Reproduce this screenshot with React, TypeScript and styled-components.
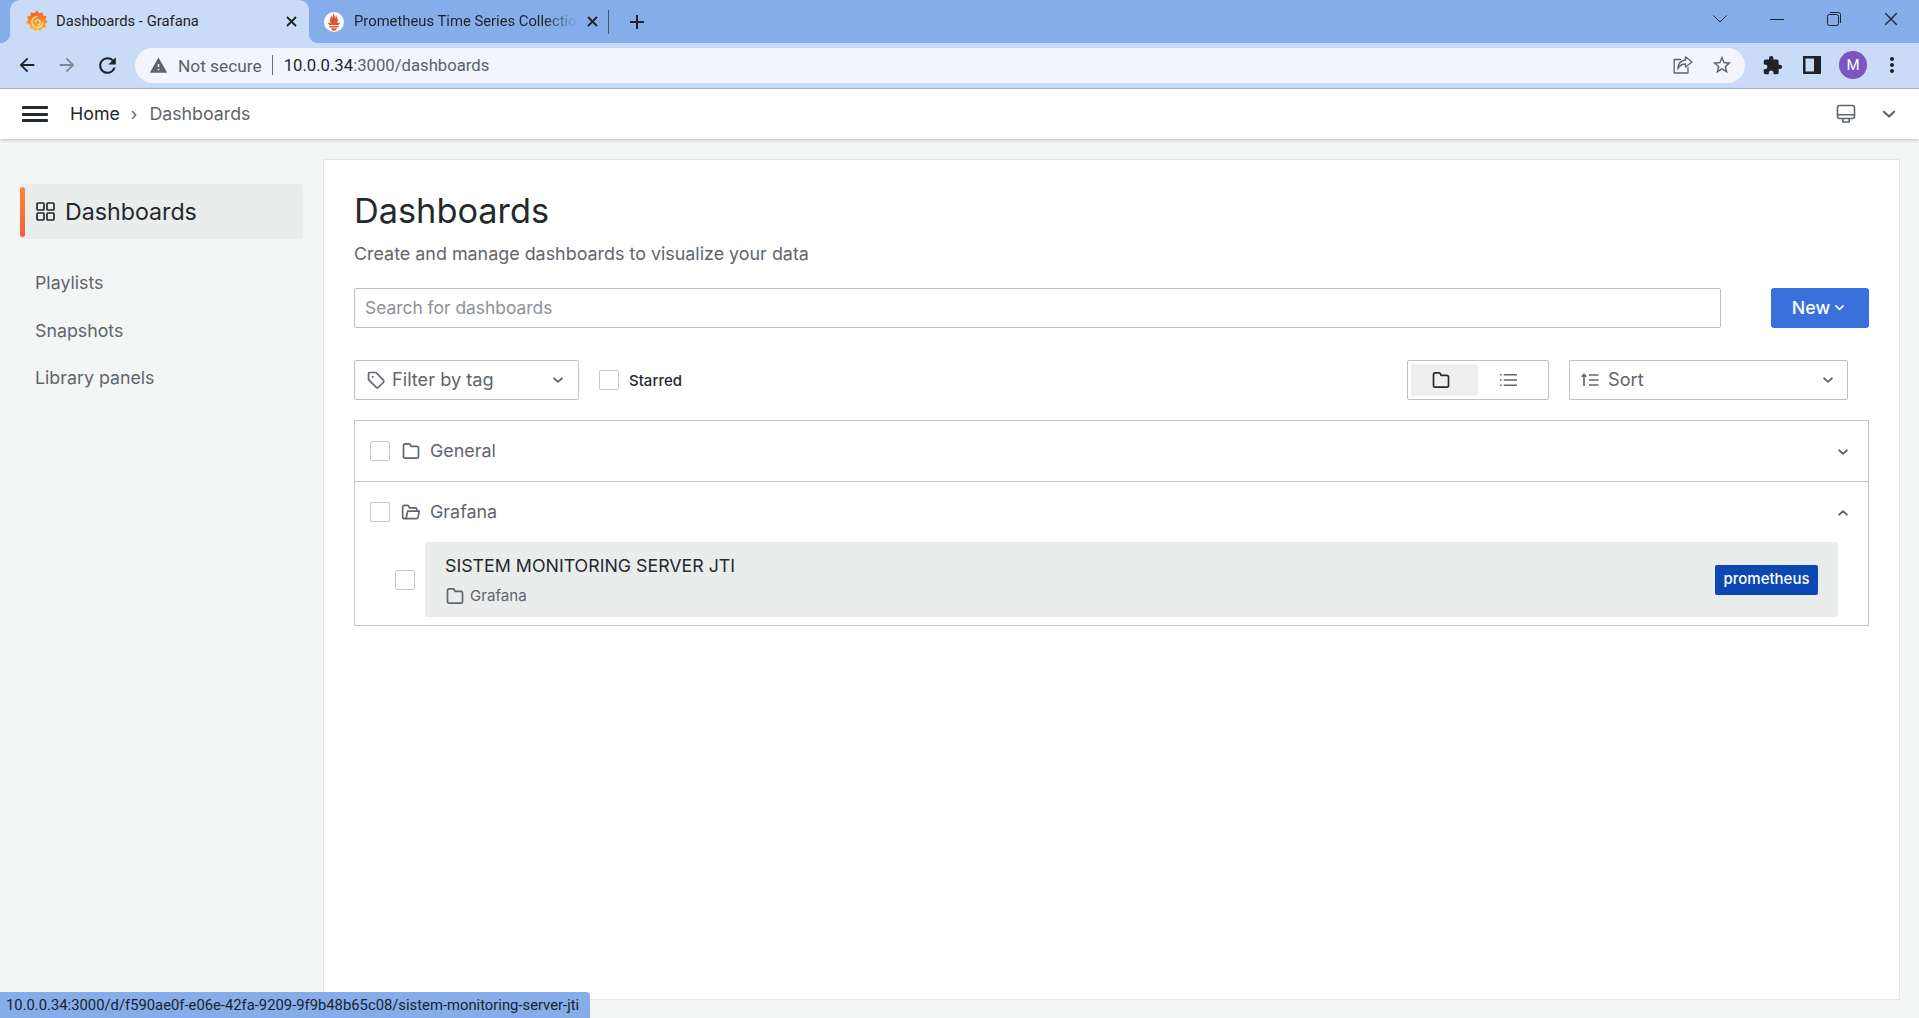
import React from "react";
import styled, { createGlobalStyle } from "styled-components";
import { MdArrowBack, MdArrowForward, MdRefresh, MdStarBorder, MdExtension, MdMoreVert, MdWarning } from "react-icons/md";

const Global = createGlobalStyle`
  html, body { margin: 0; padding: 0; height: 100%; background: #f4f5f5; overflow: hidden; }
  * { box-sizing: border-box; }
`;

const CHROME_FONT = `Roboto, "Open Sans", sans-serif`;
const UI_FONT = `Inter, "Noto Sans", sans-serif`;

const Page = styled.div`
  width: 1919px;
  height: 1018px;
  display: flex;
  flex-direction: column;
  overflow: hidden;
  background: #f4f5f5;
  font-family: ${UI_FONT};
`;

/* ---------- browser chrome ---------- */
const TabStrip = styled.div`
  height: 43px;
  flex: none;
  background: #84ade9;
  display: flex;
  align-items: stretch;
  padding-left: 10px;
  color: #1f2329;
  font-family: ${CHROME_FONT};
`;
const Tab = styled.div<{ $active?: boolean }>`
  position: relative;
  width: 299px;
  display: flex;
  align-items: center;
  padding: 0 ${(p) => (p.$active ? 12 : 10)}px 0 ${(p) => (p.$active ? 16 : 15)}px;
  gap: ${(p) => (p.$active ? 8 : 10)}px;
  border-radius: 10px 10px 0 0;
  background: ${(p) => (p.$active ? "#c9dbf6" : "transparent")};
  ${(p) =>
    p.$active &&
    `
    &::before, &::after {
      content: "";
      position: absolute;
      bottom: 0;
      width: 10px;
      height: 10px;
      background: radial-gradient(circle at var(--cx) 0, #84ade9 10px, #c9dbf6 10.5px);
    }
    &::before { left: -10px; --cx: 0; }
    &::after { right: -10px; --cx: 100%; }
  `}
`;
const TabTitle = styled.span<{ $fade?: boolean }>`
  flex: 1;
  min-width: 0;
  font-size: 14.8px;
  padding-bottom: 2px;
  white-space: nowrap;
  overflow: hidden;
  ${(p) =>
    p.$fade &&
    `
    -webkit-mask-image: linear-gradient(to right, #000 85%, transparent 100%);
    mask-image: linear-gradient(to right, #000 85%, transparent 100%);
  `}
`;
const TabSep = styled.div`
  width: 1px;
  height: 24px;
  background: #44566f;
  align-self: center;
`;
const NewTab = styled.div`
  width: 55px;
  display: flex;
  align-items: center;
  justify-content: center;
`;
const StripSpacer = styled.div`
  flex: 1;
`;
const WindowControls = styled.div`
  display: flex;
  align-items: center;
`;
const WinBtn = styled.div<{ $w: number }>`
  width: ${(p) => p.$w}px;
  display: flex;
  justify-content: center;
  margin-top: -6px;
`;

const Toolbar = styled.div`
  height: 46px;
  flex: none;
  background: #c9dbf6;
  border-bottom: 1px solid #a9b8cf;
  display: flex;
  align-items: center;
  padding-bottom: 1px;
  font-family: ${CHROME_FONT};
`;
const NavGroup = styled.div`
  display: flex;
  align-items: center;
  width: 135px;
  padding-left: 7px;
`;
const NavBtn = styled.div<{ $muted?: boolean }>`
  width: 40px;
  display: flex;
  justify-content: center;
  color: ${(p) => (p.$muted ? "#7d8794" : "#1f2329")};
`;
const Omnibox = styled.div`
  width: 1610px;
  height: 35px;
  background: #f2f6fc;
  border-radius: 18px;
  display: flex;
  align-items: center;
  padding-left: 14px;
  padding-right: 12px;
`;
const NotSecure = styled.span`
  font-size: 17.3px;
  padding-top: 1px;
  color: #5b6066;
  margin-left: 10px;
`;
const OmniSep = styled.span`
  width: 1px;
  height: 20px;
  background: #6b7077;
  margin: 0 11px 0 10px;
`;
const Url = styled.span`
  font-size: 16.7px;
  padding-top: 1px;
  color: #5b6066;
  flex: 1;
  b {
    font-weight: 400;
    color: #1f2329;
  }
`;
const OmniIcons = styled.div`
  display: flex;
  align-items: center;
  gap: 18px;
  color: #5f6368;
`;
const ToolIcons = styled.div`
  display: flex;
  align-items: center;
  color: #1f2329;
  margin-left: 14px;
`;
const ToolSlot = styled.div<{ $w: number }>`
  width: ${(p) => p.$w}px;
  display: flex;
  justify-content: center;
`;
const Avatar = styled.div`
  width: 28px;
  height: 28px;
  border-radius: 50%;
  background: #7c55c0;
  color: #fff;
  font-size: 15px;
  display: flex;
  align-items: center;
  justify-content: center;
`;

/* ---------- Grafana top bar ---------- */
const TopBar = styled.div`
  height: 50px;
  flex: none;
  background: #fff;
  display: flex;
  align-items: center;
  padding: 0 21px 0 22px;
  box-shadow: 0 1px 3px rgba(24, 26, 27, 0.22);
  position: relative;
  z-index: 1;
`;
const Hamburger = styled.div`
  width: 26px;
  height: 16px;
  display: flex;
  flex-direction: column;
  justify-content: space-between;
  margin-right: 22px;
  span {
    display: block;
    height: 3px;
    border-radius: 1px;
    background: #24292e;
  }
`;
const Crumb = styled.span<{ $muted?: boolean }>`
  font-size: 17.8px;
  padding-bottom: 1px;
  color: ${(p) => (p.$muted ? "#5f656c" : "#24292e")};
`;
const CrumbSep = styled.span`
  font-size: 17px;
  color: #5f656c;
  margin: 0 12px 0 11px;
`;
const TopRight = styled.div`
  margin-left: auto;
  display: flex;
  align-items: center;
  gap: 24px;
  color: #5f656c;
`;

/* ---------- page ---------- */
const Body = styled.div`
  flex: 1;
  display: flex;
  min-height: 0;
  padding: 20px 19px 18px 0;
`;
const Sidebar = styled.nav`
  width: 323px;
  flex: none;
  padding: 25px 0 0 20px;
`;
const ActiveItem = styled.div`
  width: 283px;
  height: 55px;
  background: #ebecec;
  border-radius: 3px;
  display: flex;
  align-items: center;
  gap: 10px;
  padding-left: 16px;
  font-size: 23.2px;
  color: #24292e;
  position: relative;
  &::before {
    content: "";
    position: absolute;
    left: 0;
    top: 3px;
    bottom: 2px;
    width: 5px;
    border-radius: 3px;
    background: linear-gradient(180deg, #f58a33 0%, #f55f3e 100%);
  }
`;
const SideLinks = styled.div`
  display: flex;
  flex-direction: column;
  padding: 20px 0 0 15px;
`;
const SideLink = styled.div`
  height: 47.6px;
  display: flex;
  align-items: center;
  font-size: 17.8px;
  color: #5f656c;
`;
const Card = styled.main`
  flex: 1;
  background: #fff;
  border: 1px solid #e6e7e8;
  padding: 30px 30px 0 30px;
  min-width: 0;
`;
const Title = styled.h1`
  margin: 0;
  font-size: 34.3px;
  line-height: 42px;
  font-weight: 400;
  color: #24292e;
`;
const Subtitle = styled.p`
  margin: 11px 0 0;
  font-size: 17.9px;
  line-height: 22px;
  color: #5f656c;
`;
const SearchRow = styled.div`
  display: flex;
  justify-content: space-between;
  margin-top: 23px;
`;
const Field = styled.div<{ $w: number }>`
  width: ${(p) => p.$w}px;
  height: 40px;
  border: 1px solid #bfc0c1;
  border-radius: 2px;
  background: #fff;
  display: flex;
  align-items: center;
  color: #5f656c;
  font-size: 18.2px;
`;
const SearchInput = styled.input`
  width: 1367px;
  height: 40px;
  border: 1px solid #bfc0c1;
  border-radius: 2px;
  padding: 0 10px 2px;
  font-family: ${UI_FONT};
  font-size: 17.4px;
  outline: none;
  &::placeholder {
    color: #8f9296;
    opacity: 1;
  }
`;
const NewButton = styled.button`
  width: 98px;
  height: 40px;
  border: 0;
  border-radius: 3px;
  background: #3871dc;
  color: #fff;
  font-family: ${UI_FONT};
  font-size: 17.8px;
  font-weight: 500;
  padding: 0 2px 2px 0;
  display: flex;
  align-items: center;
  justify-content: center;
  gap: 3px;
`;
const FilterRow = styled.div`
  display: flex;
  align-items: center;
  margin-top: 32px;
`;
const FilterLabel = styled.span`
  flex: 1;
  margin-left: 6px;
  padding-bottom: 2px;
`;
const FilterField = styled(Field)`
  padding: 0 13px 0 11px;
`;
const Check = styled.span<{ $mr?: number }>`
  width: 20px;
  height: 20px;
  flex: none;
  border: 1px solid #c5c6c7;
  border-radius: 2px;
  background: #fff;
  margin-right: ${(p) => p.$mr ?? 0}px;
`;
const StarredWrap = styled.div`
  display: flex;
  align-items: center;
  margin-left: 20px;
  font-size: 15px;
  font-weight: 500;
  color: #24292e;
  gap: 10px;
  flex: 1;
`;
const Toggle = styled.div`
  width: 142px;
  height: 40px;
  border: 1px solid #bfc0c1;
  border-radius: 2px;
  padding: 3px;
  display: flex;
  margin-right: 20px;
`;
const ToggleBtn = styled.div<{ $on?: boolean }>`
  width: 67px;
  border-radius: 2px;
  padding-right: 7px;
  background: ${(p) => (p.$on ? "#efefef" : "transparent")};
  color: ${(p) => (p.$on ? "#24292e" : "#5f656c")};
  display: flex;
  align-items: center;
  justify-content: center;
`;
const SortField = styled(Field)`
  padding: 0 12px 0 11px;
  margin-right: 21px;
  gap: 9px;
`;
const SortLabel = styled.span`
  flex: 1;
  padding-bottom: 2px;
`;
const ListBox = styled.div`
  margin-top: 20px;
  border: 1px solid #c2c3c4;
`;
const SectionRow = styled.div<{ $border?: boolean }>`
  height: ${(p) => (p.$border ? 61 : 60)}px;
  display: flex;
  align-items: center;
  padding: 0 18px 0 15px;
  font-size: 17.9px;
  color: #5f656c;
  ${(p) => p.$border && "border-bottom: 1px solid #c2c3c4;"}
`;
const SectionLabel = styled.span`
  flex: 1;
  margin-left: 9px;
  padding-bottom: 2px;
`;
const SectionChevron = styled.span`
  display: block;
  padding-top: 1px;
`;
const ItemWrap = styled.div`
  display: flex;
  align-items: center;
  padding: 0 30px 8px 40px;
`;
const ItemRow = styled.div`
  flex: 1;
  height: 75px;
  margin-left: 10px;
  background: #ebecec;
  border-radius: 2px;
  display: flex;
  align-items: center;
  justify-content: space-between;
  padding: 0 20px;
`;
const ItemText = styled.div`
  display: flex;
  flex-direction: column;
  gap: 10px;
  padding-top: 2px;
`;
const ItemTitle = styled.div`
  font-size: 17.8px;
  line-height: 21px;
  color: #24292e;
`;
const ItemMeta = styled.div`
  display: flex;
  align-items: center;
  gap: 5px;
  font-size: 15.1px;
  line-height: 18px;
  color: #5f656c;
`;
const Badge = styled.span`
  width: 103px;
  height: 30px;
  border-radius: 2px;
  padding-bottom: 2px;
  background: #0d47b4;
  color: #fff;
  font-size: 15px;
  font-weight: 500;
  display: flex;
  align-items: center;
  justify-content: center;
`;
const StatusBubble = styled.div`
  position: fixed;
  left: 0;
  bottom: 0;
  width: 590px;
  height: 26px;
  background: #84ade9;
  border-top-right-radius: 4px;
  display: flex;
  align-items: center;
  padding-left: 6px;
  font-family: ${CHROME_FONT};
  font-size: 14.8px;
  color: #1f2329;
  white-space: nowrap;
`;

/* ---------- icons ---------- */
type IconProps = { size?: number };
const Svg: React.FC<IconProps & { children: React.ReactNode; vb?: string }> = ({ size = 20, children, vb = "0 0 24 24" }) => (
  <svg width={size} height={size} viewBox={vb} fill="currentColor" style={{ display: "block", flex: "none" }}>
    {children}
  </svg>
);
const FolderIcon: React.FC<IconProps> = ({ size = 20 }) => (
  <Svg size={size}>
    <path d="M19,5.5H12.72l-.32-1a3,3,0,0,0-2.84-2H5a3,3,0,0,0-3,3v13a3,3,0,0,0,3,3H19a3,3,0,0,0,3-3V8.5A3,3,0,0,0,19,5.5Zm1,13a1,1,0,0,1-1,1H5a1,1,0,0,1-1-1V5.5a1,1,0,0,1,1-1H9.56a1,1,0,0,1,.95.68L11,6.64A1,1,0,0,0,12,7.5h7a1,1,0,0,1,1,1Z" />
  </Svg>
);
const FolderOpenIcon: React.FC<IconProps> = ({ size = 20 }) => (
  <Svg size={size}>
    <path d="M22.78,10.37A1,1,0,0,0,22,10H20V9a3,3,0,0,0-3-3H10.72l-.32-1A3,3,0,0,0,7.56,3H4A3,3,0,0,0,1,6V18a3,3,0,0,0,3,3H18.4a3,3,0,0,0,2.92-2.35L23,11.22A1,1,0,0,0,22.78,10.37ZM5.37,18.22a1,1,0,0,1-1,.78H4a1,1,0,0,1-1-1V6A1,1,0,0,1,4,5H7.56a1,1,0,0,1,1,.68l.54,1.64A1,1,0,0,0,10,8h7a1,1,0,0,1,1,1v1H8a1,1,0,0,0-1,.78Zm14,0a1,1,0,0,1-1,.78H7.21a1.42,1.42,0,0,0,.14-.11L8.8,12H20.75Z" />
  </Svg>
);
const Chevron: React.FC<{ size?: number; up?: boolean; width?: number }> = ({ size = 16, up, width = 2 }) => (
  <svg width={size} height={size} viewBox="0 0 16 16" fill="none" stroke="currentColor" strokeWidth={width} strokeLinecap="round" strokeLinejoin="round" style={{ display: "block", flex: "none" }}>
    <path d={up ? "M3.5 10 L8 5.8 L12.5 10" : "M3.5 6 L8 10.2 L12.5 6"} />
  </svg>
);
const AppsIcon = () => (
  <svg width="19" height="19" viewBox="0 0 19 19" fill="none" stroke="#24292e" strokeWidth="1.7" style={{ display: "block", flex: "none" }}>
    <rect x="1" y="1" width="7" height="7" rx="1" />
    <rect x="11" y="1" width="7" height="7" rx="1" />
    <rect x="1" y="11" width="7" height="7" rx="1" />
    <rect x="11" y="11" width="7" height="7" rx="1" />
  </svg>
);
const TagIcon = () => (
  <svg width="20" height="20" viewBox="0 0 24 24" fill="none" stroke="#5f656c" strokeWidth="2" strokeLinejoin="round" style={{ display: "block", flex: "none" }}>
    <path d="M3 4.5A1.5 1.5 0 0 1 4.5 3H12l9 9.5a1.6 1.6 0 0 1 0 2.2L14.7 21a1.6 1.6 0 0 1-2.2 0L3 11.5Z" />
    <circle cx="8" cy="8" r="1.2" fill="#5f656c" stroke="none" />
  </svg>
);
const ListIcon = () => (
  <svg width="17" height="14" viewBox="0 0 18 14" fill="none" stroke="currentColor" strokeWidth="1.6" style={{ display: "block" }}>
    <path d="M4 1.5H18M4 7H18M4 12.5H18" />
    <path d="M0 1.5H1.7M0 7H1.7M0 12.5H1.7" />
  </svg>
);
const SortIcon = () => (
  <svg width="18" height="14" viewBox="0 0 18 14" fill="none" stroke="#5f656c" strokeWidth="1.6" style={{ display: "block", flex: "none" }}>
    <path d="M3 13V1.5M0.8 3.8L3 1.5L5.2 3.8" />
    <path d="M8 2H17.5M8 7H17.5M8 12H17.5" />
  </svg>
);
const MonitorIcon = () => (
  <svg width="20" height="20" viewBox="0 0 20 20" fill="none" stroke="#5f656c" strokeWidth="1.6" strokeLinejoin="round" style={{ display: "block" }}>
    <rect x="1.5" y="1.5" width="17" height="13" rx="2" />
    <path d="M1.5 10.8H18.5M6.8 14.5V18H13.2V14.5" />
  </svg>
);
const GrafanaLogo = () => (
  <svg width="22" height="23" viewBox="0 0 20 21" style={{ display: "block", flex: "none" }}>
    <defs>
      <linearGradient id="gf" x1="0" y1="1" x2="0" y2="0">
        <stop offset="0" stopColor="#fcc22a" />
        <stop offset="1" stopColor="#f05a28" />
      </linearGradient>
    </defs>
    <path fill="url(#gf)" d="M10 0.5l2 2.6 3-1.1.5 3.1 3.2.6-1 3 2.3 2-2.4 2.1.6 3.1-3.2.3-1.4 2.9-2.9-1.3-2.6 1.9-1.4-2.9-3.2.2.3-3.2L0 11.6l2-2.5-1-3 3-.9.6-3.2 3 .9z" />
    <circle cx="10.3" cy="11" r="5" fill="none" stroke="#f7dcae" strokeWidth="1.3" strokeDasharray="23 8" />
    <path d="M8.2 11.5a2.3 2.3 0 1 1 2.4 2.2" fill="none" stroke="#f7dcae" strokeWidth="1.2" />
  </svg>
);
const PrometheusLogo = () => (
  <svg width="20" height="20" viewBox="0 0 24 24" style={{ display: "block", flex: "none" }}>
    <circle cx="12" cy="12" r="12" fill="#fff" />
    <path fill="#e6522c" d="M12 22.46c-1.885 0-3.414-1.26-3.414-2.814h6.828c0 1.553-1.528 2.813-3.414 2.813zm5.64-3.745H6.36v-2.046h11.28v2.046zm-.04-3.098H6.391c-.037-.043-.075-.086-.111-.13-1.155-1.401-1.427-2.133-1.69-2.879-.005-.025 1.4.287 2.395.511 0 0 .513.119 1.262.255-.72-.843-1.147-1.915-1.147-3.01 0-2.406 1.845-4.508 1.18-6.207.648.053 1.34 1.367 1.387 3.422.689-.951.977-2.69.977-3.755 0-1.103.727-2.385 1.454-2.429-.648 1.069.168 1.984.894 4.256.272.854.237 2.29.447 3.201.07-1.892.395-4.653 1.595-5.606-.529 1.2.079 2.702.494 3.424.671 1.164 1.078 2.047 1.078 3.716a4.642 4.642 0 0 1-1.11 2.996c.792-.149 1.34-.283 1.34-.283l2.573-.502s-.374 1.538-1.81 3.02z" />
  </svg>
);
const CloseX: React.FC<{ size?: number; w?: number }> = ({ size = 11, w = 1.8 }) => (
  <svg width={size} height={size} viewBox="0 0 11 11" fill="none" stroke="currentColor" strokeWidth={w} style={{ display: "block", flex: "none" }}>
    <path d="M1 1L10 10M10 1L1 10" />
  </svg>
);
const PlusIcon = () => (
  <svg width="16" height="16" viewBox="0 0 16 16" fill="none" stroke="currentColor" strokeWidth="2" style={{ display: "block" }}>
    <path d="M8 1V15M1 8H15" />
  </svg>
);
const ShareIcon = () => (
  <svg width="20" height="18" viewBox="0 0 20 18" fill="none" stroke="currentColor" strokeWidth="1.3" strokeLinejoin="round" style={{ display: "block" }}>
    <path d="M8 3.5H1.2V17H15V11" />
    <path d="M12.5 0.8L19 6 12.5 11V8C9 8 6.5 9.5 4.8 13 5 8 8 4.5 12.5 4Z" />
  </svg>
);
const SidePanelIcon = () => (
  <svg width="18" height="18" viewBox="0 0 18 18" style={{ display: "block" }}>
    <path fill="#1f2329" fillRule="evenodd" d="M0 0H18V18H0ZM2.5 2.5V15.5H11V2.5Z" />
  </svg>
);
const MinIcon = () => (
  <svg width="14" height="14" viewBox="0 0 14 14" stroke="#1f2329" strokeWidth="1" style={{ display: "block" }}>
    <path d="M0 7.5H14" />
  </svg>
);
const RestoreIcon = () => (
  <svg width="14" height="14" viewBox="0 0 14 14" fill="none" stroke="#1f2329" strokeWidth="1" style={{ display: "block" }}>
    <rect x="0.5" y="2.5" width="11" height="11" rx="2" />
    <path d="M3 0.5H11.5A2 2 0 0 1 13.5 2.5V11" />
  </svg>
);
const WinChevron = () => (
  <svg width="14" height="8" viewBox="0 0 14 8" fill="none" stroke="#1f2329" strokeWidth="1" style={{ display: "block" }}>
    <path d="M0.5 0.5L7 7L13.5 0.5" />
  </svg>
);

export default function App() {
  return (
    <Page>
      <Global />
      <TabStrip>
        <Tab $active>
          <GrafanaLogo />
          <TabTitle>Dashboards - Grafana</TabTitle>
          <CloseX />
        </Tab>
        <Tab>
          <PrometheusLogo />
          <TabTitle $fade>Prometheus Time Series Collection and Processing Server</TabTitle>
          <CloseX />
        </Tab>
        <TabSep />
        <NewTab>
          <PlusIcon />
        </NewTab>
        <StripSpacer />
        <WindowControls>
          <WinBtn $w={57}><WinChevron /></WinBtn>
          <WinBtn $w={57}><MinIcon /></WinBtn>
          <WinBtn $w={57}><RestoreIcon /></WinBtn>
          <WinBtn $w={57}><CloseX size={14} w={1} /></WinBtn>
        </WindowControls>
      </TabStrip>
      <Toolbar>
        <NavGroup>
          <NavBtn><MdArrowBack size={22} /></NavBtn>
          <NavBtn $muted><MdArrowForward size={22} /></NavBtn>
          <NavBtn><MdRefresh size={25} /></NavBtn>
        </NavGroup>
        <Omnibox>
          <MdWarning size={19} color="#5f6368" />
          <NotSecure>Not secure</NotSecure>
          <OmniSep />
          <Url><b>10.0.0.34</b>:3000/dashboards</Url>
          <OmniIcons>
            <ShareIcon />
            <MdStarBorder size={22} />
          </OmniIcons>
        </Omnibox>
        <ToolIcons>
          <ToolSlot $w={26}><MdExtension size={21} /></ToolSlot>
          <ToolSlot $w={54}><SidePanelIcon /></ToolSlot>
          <ToolSlot $w={28}><Avatar>M</Avatar></ToolSlot>
          <ToolSlot $w={50}><MdMoreVert size={24} /></ToolSlot>
        </ToolIcons>
      </Toolbar>
      <TopBar>
        <Hamburger><span /><span /><span /></Hamburger>
        <Crumb>Home</Crumb>
        <CrumbSep>›</CrumbSep>
        <Crumb $muted>Dashboards</Crumb>
        <TopRight>
          <MonitorIcon />
          <Chevron size={18} />
        </TopRight>
      </TopBar>
      <Body>
        <Sidebar>
          <ActiveItem>
            <AppsIcon />
            Dashboards
          </ActiveItem>
          <SideLinks>
            <SideLink>Playlists</SideLink>
            <SideLink>Snapshots</SideLink>
            <SideLink>Library panels</SideLink>
          </SideLinks>
        </Sidebar>
        <Card>
          <Title>Dashboards</Title>
          <Subtitle>Create and manage dashboards to visualize your data</Subtitle>
          <SearchRow>
            <SearchInput placeholder="Search for dashboards" readOnly />
            <NewButton>New <Chevron size={13} /></NewButton>
          </SearchRow>
          <FilterRow>
            <FilterField $w={225}>
              <TagIcon />
              <FilterLabel>Filter by tag</FilterLabel>
              <Chevron size={14} />
            </FilterField>
            <StarredWrap>
              <Check />
              Starred
            </StarredWrap>
            <Toggle>
              <ToggleBtn $on><FolderIcon size={20} /></ToggleBtn>
              <ToggleBtn><ListIcon /></ToggleBtn>
            </Toggle>
            <SortField $w={279}>
              <SortIcon />
              <SortLabel>Sort</SortLabel>
              <Chevron size={14} />
            </SortField>
          </FilterRow>
          <ListBox>
            <SectionRow $border>
              <Check $mr={11} />
              <FolderIcon size={20} />
              <SectionLabel>General</SectionLabel>
              <SectionChevron><Chevron size={14} /></SectionChevron>
            </SectionRow>
            <SectionRow>
              <Check $mr={11} />
              <FolderOpenIcon size={20} />
              <SectionLabel>Grafana</SectionLabel>
              <SectionChevron><Chevron size={14} up /></SectionChevron>
            </SectionRow>
            <ItemWrap>
              <Check />
              <ItemRow>
                <ItemText>
                  <ItemTitle>SISTEM MONITORING SERVER JTI</ItemTitle>
                  <ItemMeta>
                    <FolderIcon size={20} />
                    Grafana
                  </ItemMeta>
                </ItemText>
                <Badge>prometheus</Badge>
              </ItemRow>
            </ItemWrap>
          </ListBox>
        </Card>
      </Body>
      <StatusBubble>10.0.0.34:3000/d/f590ae0f-e06e-42fa-9209-9f9b48b65c08/sistem-monitoring-server-jti</StatusBubble>
    </Page>
  );
}
